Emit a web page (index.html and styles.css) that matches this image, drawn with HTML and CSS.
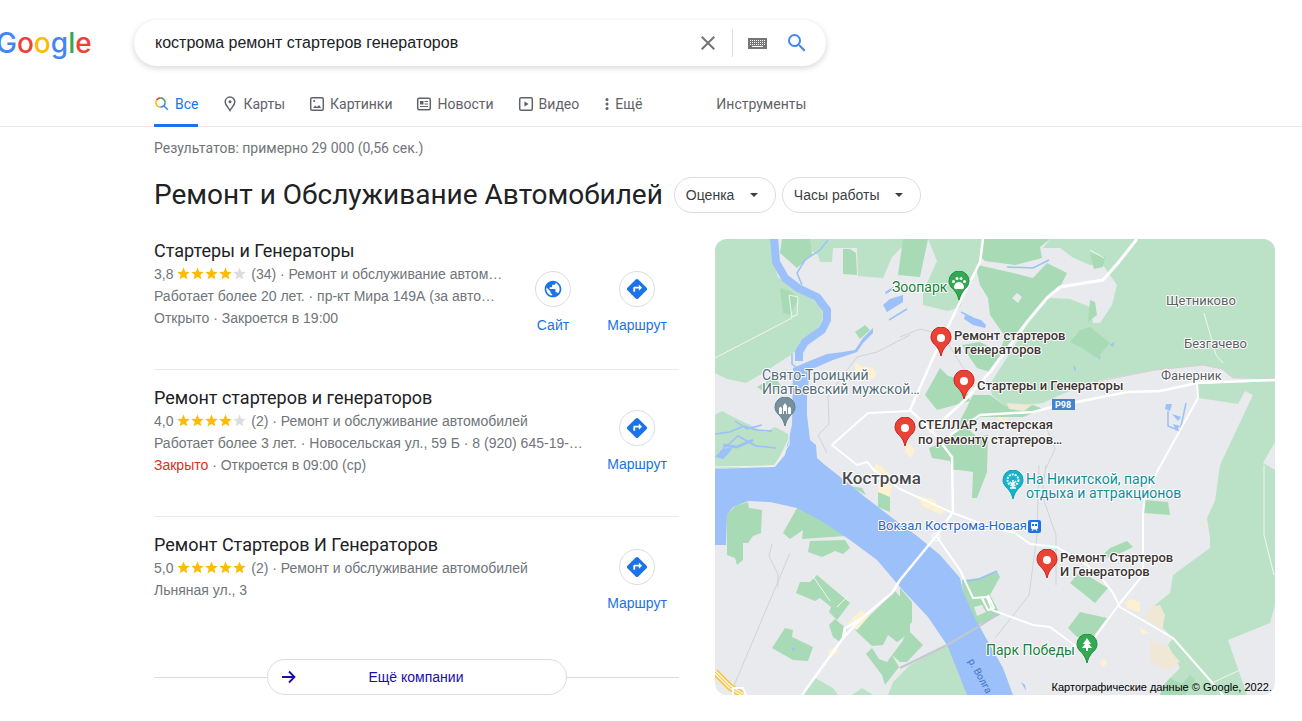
FILE: index.html
```
<!DOCTYPE html>
<html lang="ru">
<head>
    <meta charset="utf-8">
    <title>кострома ремонт стартеров генераторов - Поиск в Google</title>
    <link rel="stylesheet" href="styles.css">
</head>
<body>
    <!-- shared icons -->
    <svg class="sprite" aria-hidden="true">
        <symbol id="star" viewBox="0 0 24 24"><path d="M12 1l3.200 7.600 8.300.7-6.300 5.400 1.900 8.100L12 18.500l-7.100 4.300 1.900-8.100L.5 9.300l8.300-.7z"/></symbol>
        <symbol id="directions" viewBox="0 0 24 24"><path d="M22.430 10.590l-9.010-9.010c-.75-.75-2.070-.76-2.840 0l-9 9c-.78.78-.78 2.040 0 2.820l9 9c.39.39.9.590 1.410.590.510 0 1.020-.2 1.420-.590l8.990-8.990c.79-.77.8-2.020.030-2.820zM14 14v-2.500h-4V15H8v-4c0-.9.700-1.500 1.500-1.500H14V7l3.500 3.500L14 14z"/></symbol>
        <symbol id="globe" viewBox="0 0 24 24"><path d="M12 2C6.480 2 2 6.480 2 12s4.480 10 10 10 10-4.480 10-10S17.520 2 12 2zm-1 17.930c-3.950-.49-7-3.850-7-7.930 0-.62.080-1.210.210-1.790L9 15v1c0 1.100.9 2 2 2v1.930zm6.900-2.540c-.26-.81-1-1.390-1.900-1.390h-1v-3c0-.55-.45-1-1-1H8v-2h2c.55 0 1-.45 1-1V7h2c1.100 0 2-.9 2-2v-.41c2.930 1.190 5 4.060 5 7.410 0 2.080-.8 3.970-2.100 5.390z"/></symbol>
        <symbol id="pin" viewBox="-11 -29 22 30"><path d="M0 0C-1.500-6-3.500-8.500-6.500-11.500-8.500-13.500-10-16-10-19a10 10 0 0 1 20 0c0 3-1.500 5.500-3.500 7.500C3.500-8.500 1.500-6 0 0z"/></symbol>
    </svg>

    <header class="header">
        <a class="logo" href="#" aria-label="Google"><span class="blue">G</span><span class="red">o</span><span class="yellow">o</span><span class="blue">g</span><span class="green">l</span><span class="red">e</span></a>
        <form class="search">
            <input class="search-input" type="text" aria-label="Найти" value="кострома ремонт стартеров генераторов">
            <button class="search-button clear" type="button" aria-label="Очистить">
                <svg width="24" height="24" viewBox="0 0 24 24"><path d="M19 6.410L17.590 5 12 10.590 6.410 5 5 6.410 10.590 12 5 17.590 6.410 19 12 13.410 17.590 19 19 17.590 13.410 12z" fill="#70757a"/></svg>
            </button>
            <button class="search-button" type="button" aria-label="Экранная клавиатура">
                <svg width="19" height="11" viewBox="0 0 19 11" shape-rendering="crispEdges">
                    <path d="M0 0h19v11H0z" fill="#757575"/>
                    <path d="M2 2.500h15M2 4.500h15M2 6.500h15" stroke="#fff" stroke-dasharray="1 1"/>
                    <path d="M4 8.500h11" stroke="#fff"/>
                </svg>
            </button>
            <button class="search-button" type="submit" aria-label="Поиск">
                <svg width="24" height="24" viewBox="0 0 24 24"><path d="M15.500 14h-.79l-.28-.27A6.471 6.471 0 0 0 16 9.500 6.500 6.500 0 1 0 9.500 16c1.610 0 3.090-.59 4.230-1.570l.27.28v.79l5 4.990L20.490 19l-4.990-5zm-6 0C7.010 14 5 11.990 5 9.500S7.010 5 9.500 5 14 7.010 14 9.500 11.990 14 9.500 14z" fill="#4285f4"/></svg>
            </button>
        </form>
    </header>

    <nav class="tabs">
        <a class="tab active" href="#">
            <svg width="16" height="16" viewBox="0 0 16 16" fill="none" stroke-width="1.600">
                <path d="M2.500 4.200A4.600 4.600 0 0 1 6.500 1.900" stroke="#ea4335"/>
                <path d="M6.500 1.900A4.600 4.600 0 0 1 11.100 6.500" stroke="#34a853"/>
                <path d="M2.500 4.200A4.600 4.600 0 0 0 6.500 11.100" stroke="#fbbc04"/>
                <path d="M6.500 11.100A4.600 4.600 0 0 0 11.100 6.500M9.800 9.800l4 4" stroke="#4285f4"/>
            </svg>Все</a>
        <a class="tab" href="#">
            <svg width="16" height="16" viewBox="0 0 16 16" fill="none" stroke="#5f6368" stroke-width="1.500"><path d="M8 14.500C6.500 11.500 3.200 9 3.200 5.900a4.800 4.800 0 0 1 9.600 0C12.800 9 9.500 11.500 8 14.500z"/><circle cx="8" cy="5.800" r="1.500" fill="#5f6368" stroke="none"/></svg>Карты</a>
        <a class="tab" href="#">
            <svg width="16" height="16" viewBox="0 0 16 16"><rect x="1.700" y="1.700" width="12.600" height="12.600" rx="1.500" fill="none" stroke="#5f6368" stroke-width="1.500"/><path d="M4 12l2.200-2.500L8 11l2-2 2.200 3z" fill="#5f6368"/><circle cx="5.200" cy="5" r="1.100" fill="#5f6368"/></svg>Картинки</a>
        <a class="tab" href="#">
            <svg width="16" height="16" viewBox="0 0 16 16" stroke="#5f6368"><rect x="1.700" y="2.200" width="12.600" height="11.600" rx="1.500" fill="none" stroke-width="1.500"/><path d="M4 5h3.500v3.500H4z" fill="#5f6368" stroke="none"/><path d="M8.500 5.500H12M8.500 8H12M4 10.500h8"/></svg>Новости</a>
        <a class="tab" href="#">
            <svg width="16" height="16" viewBox="0 0 16 16"><rect x="1.700" y="1.700" width="12.600" height="12.600" rx="1.500" fill="none" stroke="#5f6368" stroke-width="1.500"/><path d="M6.500 5.200v5.600L10.500 8z" fill="#5f6368"/></svg>Видео</a>
        <button class="tab more" type="button">
            <svg width="8" height="16" viewBox="0 0 8 16" fill="#5f6368"><circle cx="4" cy="3.500" r="1.500"/><circle cx="4" cy="8" r="1.500"/><circle cx="4" cy="12.500" r="1.500"/></svg>Ещё</button>
        <button class="tab tools" type="button">Инструменты</button>
    </nav>

    <main class="main">
        <div class="stats">Результатов: примерно 29 000 (0,56 сек.)</div>
        <div class="heading">
            <h1>Ремонт и Обслуживание Автомобилей</h1>
            <div class="filter">
                <select aria-label="Оценка"><option>Оценка</option></select>
                <svg width="8" height="4" viewBox="0 0 8 4"><path d="M0 0h8L4 4z" fill="#3c4043"/></svg>
            </div>
            <div class="filter">
                <select aria-label="Часы работы"><option>Часы работы</option></select>
                <svg width="8" height="4" viewBox="0 0 8 4"><path d="M0 0h8L4 4z" fill="#3c4043"/></svg>
            </div>
        </div>

        <div class="content">
            <section class="places">
                <article class="place">
                    <div class="info">
                        <h2>Стартеры и Генераторы</h2>
                        <p>3,8 <span class="stars"><svg><use href="#star"/></svg><svg><use href="#star"/></svg><svg><use href="#star"/></svg><svg><use href="#star"/></svg><svg class="empty"><use href="#star"/></svg></span> (34) · Ремонт и обслуживание автом…</p>
                        <p>Работает более 20 лет. · пр-кт Мира 149А (за авто…</p>
                        <p>Открыто · Закроется в 19:00</p>
                    </div>
                    <a class="action" href="#"><span class="circle"><svg width="20" height="20"><use href="#globe"/></svg></span>Сайт</a>
                    <a class="action" href="#"><span class="circle"><svg width="22" height="22"><use href="#directions"/></svg></span>Маршрут</a>
                </article>
                <article class="place">
                    <div class="info">
                        <h2>Ремонт стартеров и генераторов</h2>
                        <p>4,0 <span class="stars"><svg><use href="#star"/></svg><svg><use href="#star"/></svg><svg><use href="#star"/></svg><svg><use href="#star"/></svg><svg class="empty"><use href="#star"/></svg></span> (2) · Ремонт и обслуживание автомобилей</p>
                        <p>Работает более 3 лет. · Новосельская ул., 59 Б · 8 (920) 645-19-…</p>
                        <p><span class="closed">Закрыто</span> · Откроется в 09:00 (ср)</p>
                    </div>
                    <a class="action" href="#"><span class="circle"><svg width="22" height="22"><use href="#directions"/></svg></span>Маршрут</a>
                </article>
                <article class="place">
                    <div class="info">
                        <h2>Ремонт Стартеров И Генераторов</h2>
                        <p>5,0 <span class="stars"><svg><use href="#star"/></svg><svg><use href="#star"/></svg><svg><use href="#star"/></svg><svg><use href="#star"/></svg><svg><use href="#star"/></svg></span> (2) · Ремонт и обслуживание автомобилей</p>
                        <p>Льняная ул., 3</p>
                    </div>
                    <a class="action" href="#"><span class="circle"><svg width="22" height="22"><use href="#directions"/></svg></span>Маршрут</a>
                </article>
                <div class="more-row">
                    <a class="more-places" href="#">
                        <svg width="16" height="16" viewBox="0 0 16 16" fill="none" stroke="#1a0dab" stroke-width="1.800"><path d="M1 8h12.500M8 2.500l5.500 5.500L8 13.500"/></svg>
                        <span>Ещё компании</span>
                    </a>
                </div>
            </section>

            <svg class="map" viewBox="0 0 560 456" role="img" aria-label="Карта Костромы">
                <rect width="560" height="456" fill="#e8eaed"/>

                <!-- forests -->
                <g fill="#bbe2c6">
                    <path d="M0 0H56L57 19 63 38 77 49 95 58 107 69 108 79 103 89 85 103 82 111 77 115 48 134 31 144 12 140 0 134z"/>
                    <path d="M95 0H268L267 19 252 49 245 68 233 72 208 66V53L222 22 213 0 195 0 177 18 168 39 143 37 142 9 118 9 117 23H105L103 16 95 11z"/>
                    <path d="M0 176L7 172 20 179 50 193 60 188 75 196 67 213 60 226 0 230z"/>
                    <path d="M335 0H560V141L518 139 507 130 488 126 440 131 385 141 345 156 328 164 292 168 277 156 275 145 302 103 315 79 345 48 388 41 345 9 328 9z"/>
                    <path d="M483 145L560 142V203L548 224 560 231V366L555 384 513 401 532 456H447L455 439 465 429 453 406 458 399 448 389 440 366 455 354 458 336 495 309V299L492 279 500 262 505 226 538 156 530 152 523 165 484 159z"/>
                    <path d="M173 456L178 443 195 426 232 406 245 433 252 456zM88 456L100 439 118 449 123 456zM137 456L147 449 158 456z"/>
                </g>
                <path d="M328 9H345L352 16 375 26 388 26 402 46 397 66 385 84H378L375 68 355 60 335 59 348 46 330 24z" fill="#e8eaed"/>

                <!-- parks -->
                <g fill="#a8dab5">
                    <path d="M67 0H95L97 16 82 29 65 14zM128 10L135 10 141 14 142 36 128 35zM188 0H213L205 38 183 36zM65 49L77 53 83 60 75 76 68 74zM140 93L150 86 155 91 145 100zM42 148L60 138 68 150 48 152z"/>
                    <path d="M268 0H335L325 8 327 19 300 26 270 22 267 19z"/>
                    <path d="M263 26L298 34 318 39 332 24 352 34 345 48 315 79 298 103 275 133 262 129 255 119 247 106 265 103 285 113 290 97 287 93 275 76 273 59 265 46 262 33z"/>
                    <path d="M355 103L365 91 375 88 395 104 382 119 367 109zM375 61L380 63 382 76 373 83zM375 14L390 18 388 28 379 30z"/>
                    <path d="M210 156L225 129 233 137 248 140 255 162 222 171zM258 156H275L292 168 318 166 328 170 308 178 265 178 252 189 262 198 273 196 272 231H237L235 222 217 219 214 209 228 203 238 196z"/>
                    <path d="M243 226H272V233L262 259H257L258 233 244 231zM163 253L175 255V273L163 268zM135 247L147 249 151 256z"/>
                    <path d="M355 344L365 332 393 349 380 364zM353 389L365 373 392 379 378 398 362 398zM429 261L453 263 455 276 429 274zM382 322L395 309 412 302 418 308 408 313z"/>
                    <path d="M247 341L265 339 282 332 285 338 275 356 282 369 285 376 263 386 248 356z"/>
                    <path d="M185 349L197 363V383L185 396zM177 416L187 403 193 391 208 406 192 423H185z"/>
                    <path d="M12 276L20 267 33 263 34 269 47 271 46 294 38 297 33 304H28V321L22 326 20 319 12 316z"/>
                    <path d="M68 294L82 269 105 276 130 297 87 300 88 291 75 300zM95 302L130 301 135 309 128 315 120 312 107 318 93 313z"/>
                    <path d="M81 354L85 343 95 343 102 336 135 364 122 381 114 373 116 368 105 359 100 362zM114 386L120 380 132 390 125 403 118 398z"/>
                    <path d="M57 409L70 389 78 391 77 398 98 408 93 422 78 421zM140 391L180 352 195 369V394L182 403 173 396 168 406 157 407z"/>
                    <path d="M151 415L157 409 164 420 172 423 177 416 184 428 170 446 167 436zM0 281H8V291L0 301z"/>
                    <path d="M447 448L455 439 467 445 475 436 480 441 470 456H445z"/>
                </g>
                <path d="M302 54l5 4-4 6-6-5zM259 368l8-2 4 7-9 4z" fill="#e8eaed"/>

                <!-- built-up areas -->
                <g fill="#fdf1cf">
                    <path d="M140 123l6 4 12 2 4 6-4 5-18-2zM160 225l6 2 10 10-4 6-12-3zM163 242l14 4-2 12-12-5zM203 257l16 3 4 8 8 4-6 3-18-8zM133 384l13-13 8 6-12 14zM113 412l7-4 4 3-8 8zM410 363l6-3 9 3v10l-13-4zM424 388l11 6-8 1zM385 423l5-3 2 5-5 3zM192 203l8 8-4 8-6-6zM282 178l12 2-6 7z"/>
                    <path d="M430 379L435 368 445 366 450 376 447 391zM435 401L452 408 465 423 452 431 435 423zM483 282l6 2 3 8zM292 164l25 2-8 6-15-2z" fill="#f0e8d5"/>
                </g>

                <!-- water -->
                <g fill="#9cc0f9">
                    <path d="M78 129L92 123 112 115 128 113 140 111 148 99 158 89V94L148 104 142 113 118 121 95 131 92 156V176L95 201 101 206 102 219 110 226 138 248 150 258 180 281 202 297 225 316 245 339 248 353 260 379 272 401 288 429 298 456H252L243 433 232 406 213 378 185 348 162 321 135 301 108 283 82 269 55 263 33 262 18 268 12 276 11 306H0V230L60 228 70 216 77 186z"/>
                    <path d="M168 66L175 60 188 56V63L172 73zM170 53l8-5 1 2-8 5zM0 218l8-8 10-2-4 6-6 6zM250 76l16 5 5 5-1 3-12-3-9-6z"/>
                    <path d="M451 165h6l-2 7-5-2zM457 175l9 3-3 4zM458 185l7 2-4 5zM436 166l4 2M395 106l4-3-1 5zM383 118l3-1-2 4zM358 126l3 3-1 4zM76 408l5 2-3 2zM306 443l4 3 1 6z"/>
                </g>
                <g fill="none" stroke="#9cc0f9">
                    <path d="M59-2L61 23 70 39 83 49 102 58 112 71V81L107 91 90 103 84 113V122" stroke-width="8" stroke-linejoin="round"/>
                    <path d="M87 46L82 34 90 21 105 11 113 1M77 115v10l5 4M0 195l15-2 14-6 12 4 16 1M5 213l18-16 18 10 20 2M20 182l12 8 15-4M292 28l26 1 16-8M248 343l16-3 18-8M174 81l18-11M246 73l12 6M453 172v15l12 5 6-28" stroke-width="1.500"/>
                    <path d="M8 206l14 2 16-7" stroke-width="3"/>
                </g>

                <!-- railways and minor borders -->
                <g fill="none" stroke="#d0d3d7">
                    <path d="M195 96L162 113 142 118 118 150 113 156 114 185 103 196 112 214M185 98l20-8 22 5 20 32 14 24M75 314L18 449M57 305l-3 12 9 18v14M324 226l-2 70-8 60-14 18-20 25M331 226l-4 30 14 40v50M332 190l8 20-10 21"/>
                    <path d="M285 374L263 388 232 406 185 429" stroke="#c4c7cb" stroke-width="2"/>
                    <path d="M375 144L440 131 488 126 507 130 518 139 560 138" stroke="#d6cfd3"/>
                </g>
                <path d="M0 119L77 79 74 56 83 58 82 76 76 78M0 228l59-1 15-21V195M489 74l12 42 7 8M549 226v70l10 40M97 336l18 26M122 368l12-12M499 443l26-12M389 19l-14-8" fill="none" stroke="#f1f6ee"/>

                <!-- main roads -->
                <g fill="none" stroke="#fff" stroke-width="2" stroke-linejoin="round">
                    <path d="M268 0L265 23 245 63 218 119 195 171 218 193 237 218 238 273 222 296 185 341 177 354 147 379 128 399 87 456" stroke-width="2.500"/>
                    <path d="M195 172L153 174 117 206 142 226 152 223 160 232 185 250 238 274 275 288 300 294 315 305 342 308 372 326 388 341 398 354 405 368 458 399 508 456"/>
                    <path d="M422 0L403 24 388 41 345 48 332 59 312 83 275 133 252 159 215 193" stroke-width="3"/>
                    <path d="M560 141L482 144 445 152 412 153 337 168 318 173 265 176 235 196" stroke-width="2.500"/>
                    <path d="M482 144L483 159 443 231 430 256 428 276V336L405 364 380 398"/>
                    <path d="M222 298L245 331 258 359 272 358 277 371 318 386 335 388 362 408M267 359l6 12 6-2-6-13"/>
                    <circle cx="221" cy="298" r="4" stroke-width="1"/>
                    <path d="M128 399l2-10 8-4 6-4" stroke-width="3"/>
                </g>
                <path d="M0 433L15 448 28 456" fill="none" stroke="#f9c23c" stroke-width="7"/>
                <path d="M0 433L15 448 28 456" fill="none" stroke="#fdf1cf" stroke-width="4"/>
                <path d="M0 433L15 448 28 456" fill="none" stroke="#f9c23c" stroke-width="1"/>
                <path d="M18 456V449h10l3 7" fill="none" stroke="#fff" stroke-width="2"/>

                <!-- markers -->
                <g stroke-width="1">
                    <use href="#pin" x="215" y="88" width="22" height="30" fill="#ea4335" stroke="#c5221f"/>
                    <use href="#pin" x="238" y="131" width="22" height="30" fill="#ea4335" stroke="#c5221f"/>
                    <use href="#pin" x="179" y="178" width="22" height="30" fill="#ea4335" stroke="#c5221f"/>
                    <use href="#pin" x="321" y="310" width="22" height="30" fill="#ea4335" stroke="#c5221f"/>
                    <use href="#pin" x="233" y="32" width="22" height="30" fill="#34a853" stroke="#1e8e3e"/>
                    <use href="#pin" x="361" y="395" width="22" height="30" fill="#34a853" stroke="#1e8e3e"/>
                    <use href="#pin" x="59" y="158" width="22" height="30" fill="#78909c" stroke="#607d8b"/>
                    <use href="#pin" x="287" y="231" width="22" height="30" fill="#12b5cb" stroke="#129eaf"/>
                </g>
                <g fill="#fff">
                    <circle cx="226" cy="99" r="4"/>
                    <circle cx="249" cy="142" r="4"/>
                    <circle cx="190" cy="189" r="4"/>
                    <circle cx="332" cy="321" r="4"/>
                    <path d="M244 43c3 0 5 3 5 5 0 3-3 2-5 2s-5 1-5-2c0-2 2-5 5-5z"/>
                    <circle cx="238.500" cy="42.500" r="1.500"/><circle cx="242" cy="39.500" r="1.500"/><circle cx="246" cy="39.500" r="1.500"/><circle cx="249.500" cy="42.500" r="1.500"/>
                    <path d="M372 399l4 6h-2l3 4h-4v3h-2v-3h-4l3-4h-2z"/>
                    <path d="M64 175v-6l1.500-1.500L67 169v6zM68 175v-8l2-3 2 3v8h-1v-3h-2v3zM73 175v-6l1.500-1.500L76 169v6z"/>
                </g>
                <g fill="none" stroke="#fff">
                    <path d="M295 249h6M298 249v-8M298 246l-3-3M298 245l3-3" stroke-width="1.500"/>
                    <circle cx="298" cy="241" r="5.500" stroke-width="2" stroke-dasharray="2 1"/>
                </g>
                <rect x="313" y="281" width="13" height="13" rx="2" fill="#1a73e8"/>
                <rect x="316" y="283" width="7" height="7" rx="1" fill="#fff"/>
                <path d="M317 285h2v2h-2zM320 285h2v2h-2z" fill="#1a73e8"/>
                <path d="M317 292l1-2h3l1 2" fill="none" stroke="#fff"/>
                <rect x="337" y="160" width="23" height="11" fill="#4285c9"/>
                <text class="road" x="348" y="169" text-anchor="middle">Р98</text>

                <!-- labels -->
                <g class="label business">
                    <text x="239" y="101">Ремонт стартеров</text>
                    <text x="239" y="115">и генераторов</text>
                    <text x="262" y="151">Стартеры и Генераторы</text>
                    <text x="203" y="190">СТЕЛЛАР, мастерская</text>
                    <text x="203" y="205">по ремонту стартеров…</text>
                    <text x="345" y="323">Ремонт Стартеров</text>
                    <text x="345" y="337">И Генераторов</text>
                </g>
                <g class="label town">
                    <text x="451" y="66">Щетниково</text>
                    <text x="469" y="109">Безгачево</text>
                    <text x="446" y="141">Фанерник</text>
                </g>
                <text class="label city" x="127" y="245">Кострома</text>
                <g class="label sight">
                    <text x="47" y="141">Свято-Троицкий</text>
                    <text x="47" y="155">Ипатьевский мужской…</text>
                </g>
                <text class="label park" x="177" y="53">Зоопарк</text>
                <text class="label park" x="271" y="416">Парк Победы</text>
                <g class="label fun">
                    <text x="311" y="245">На Никитской, парк</text>
                    <text x="311" y="259">отдыха и аттракционов</text>
                </g>
                <text class="label station" x="163" y="291">Вокзал Кострома-Новая</text>
                <text class="river" transform="translate(253 422) rotate(61)">р. Волга</text>
                <text class="copyright" x="557" y="452" text-anchor="end">Картографические данные © Google, 2022.</text>
            </svg>
        </div>
    </main>
</body>
</html>
```
FILE: styles.css
```
* {
    box-sizing: border-box;
}
body {
    margin: 0;
    background-color: #fff;
    color: #202124;
    font-family: "Liberation Sans", Arial, sans-serif;
    font-size: 14px;
}
a {
    text-decoration: none;
}
button {
    border: none;
    background: none;
    padding: 0;
    cursor: pointer;
}
.sprite {
    display: none;
}

/* header */
.header {
    display: flex;
    align-items: center;
    padding-top: 20px;
}
.logo {
    width: 138px;
    margin-left: -4px;
    font-family: Inter, sans-serif;
    font-size: 28px;
    font-weight: 500;
    line-height: 46px;
}
.blue {
    color: #4285f4;
}
.red {
    color: #ea4335;
}
.yellow {
    color: #fbbc04;
}
.green {
    color: #34a853;
}
.search {
    display: flex;
    align-items: center;
    width: 692px;
    height: 46px;
    padding: 0 9px 0 21px;
    border-radius: 24px;
    box-shadow: 0 2px 5px 1px rgba(64, 60, 67, 0.16);
}
.search-input {
    flex: 1;
    min-width: 0;
    padding: 0;
    border: none;
    outline: none;
    background: none;
    color: #202124;
    font-family: inherit;
    font-size: 16px;
}
.search-button {
    display: flex;
    align-items: center;
    justify-content: center;
    width: 40px;
    height: 28px;
}
.search-button.clear {
    width: 50px;
    margin-right: 4px;
    border-right: 1px solid #dadce0;
}

/* tabs */
.tabs {
    display: flex;
    gap: 24px;
    height: 61px;
    padding: 18px 0 0 154px;
    border-bottom: 1px solid #ebebeb;
}
.tab {
    display: flex;
    gap: 5px;
    align-items: center;
    height: 43px;
    border-bottom: 3px solid transparent;
    color: #5f6368;
    font-family: Roboto, sans-serif;
    font-size: 14px;
    line-height: 20px;
}
.tab.active {
    border-bottom-color: #1a73e8;
    color: #1a73e8;
}
.tab.more {
    gap: 4px;
}
.tab.tools {
    margin-left: 50px;
}

/* results */
.main {
    padding-left: 154px;
}
.stats {
    padding-top: 11px;
    color: #70757a;
    font-family: Roboto, sans-serif;
    line-height: 20px;
}
.heading {
    display: flex;
    align-items: center;
    gap: 6px;
    margin-top: 19px;
}
.heading h1 {
    margin: 0;
    padding-right: 5px;
    font-family: Roboto, sans-serif;
    font-size: 28px;
    font-weight: 400;
    line-height: 36px;
}
.filter {
    position: relative;
    display: flex;
    align-items: center;
}
.filter select {
    appearance: none;
    height: 36px;
    padding: 0 40px 0 11px;
    border: 1px solid #dadce0;
    border-radius: 18px;
    background-color: #fff;
    color: #3c4043;
    font-family: inherit;
    font-size: 14px;
}
.filter svg {
    position: absolute;
    right: 18px;
    pointer-events: none;
}
.content {
    display: flex;
    gap: 36px;
    align-items: flex-start;
    margin-top: 10px;
    padding-right: 27px;
}
.places {
    flex: 1;
    min-width: 0;
}
.place {
    display: flex;
    height: 147px;
    padding-top: 16px;
    border-bottom: 1px solid #ebebeb;
}
.place:nth-of-type(3) {
    height: 142px;
    border-bottom: none;
}
.info {
    flex: 1;
    min-width: 0;
    color: #70757a;
}
.info h2 {
    margin: 0;
    color: #202124;
    font-family: Roboto, sans-serif;
    font-size: 18px;
    font-weight: 400;
    line-height: 24px;
}
.info p {
    margin: 0;
    line-height: 22px;
    white-space: nowrap;
}
.stars svg {
    width: 13px;
    height: 13px;
    margin-right: 1px;
    vertical-align: -1px;
    fill: #fbbc04;
}
.stars .empty {
    fill: #dadce0;
}
.closed {
    color: #d93025;
}
.action {
    display: flex;
    flex-direction: column;
    align-items: center;
    gap: 8px;
    width: 84px;
    padding-top: 32px;
    color: #1a73e8;
    line-height: 20px;
}
.place:nth-of-type(2) .action {
    padding-top: 24px;
}
.place:nth-of-type(3) .action {
    padding-top: 16px;
}
.circle {
    display: flex;
    align-items: center;
    justify-content: center;
    width: 36px;
    height: 36px;
    border: 1px solid #dadce0;
    border-radius: 50%;
    fill: #1a73e8;
}
.more-row {
    display: flex;
    align-items: center;
}
.more-row::before,
.more-row::after {
    content: "";
    flex: 1;
    border-top: 1px solid #dadce0;
}
.more-places {
    display: flex;
    align-items: center;
    width: 300px;
    height: 36px;
    padding: 0 30px 0 13px;
    border: 1px solid #dadce0;
    border-radius: 18px;
    color: #1a0dab;
}
.more-places span {
    flex: 1;
    text-align: center;
}

/* map */
.map {
    flex: none;
    width: 560px;
    margin-top: 16px;
    border-radius: 12px;
    font-family: Roboto, sans-serif;
}
.label {
    font-size: 13px;
    paint-order: stroke;
    stroke: #fff;
    stroke-width: 2px;
    stroke-linejoin: round;
}
.business {
    fill: #3c3533;
    font-weight: 500;
}
.town {
    fill: #5b5e63;
}
.city {
    fill: #45484d;
    font-size: 17px;
    font-weight: 500;
}
.sight {
    fill: #546e7a;
    font-size: 14px;
}
.park {
    fill: #188038;
    font-size: 14px;
}
.fun {
    fill: #128c99;
    font-size: 14px;
}
.station {
    fill: #2a66cc;
}
.road {
    fill: #fff;
    font-size: 9px;
    font-weight: 700;
}
.river {
    fill: #3f74c8;
    font-size: 10px;
}
.copyright {
    fill: #000;
    font-family: "Liberation Sans", Arial, sans-serif;
    font-size: 11px;
}
```
